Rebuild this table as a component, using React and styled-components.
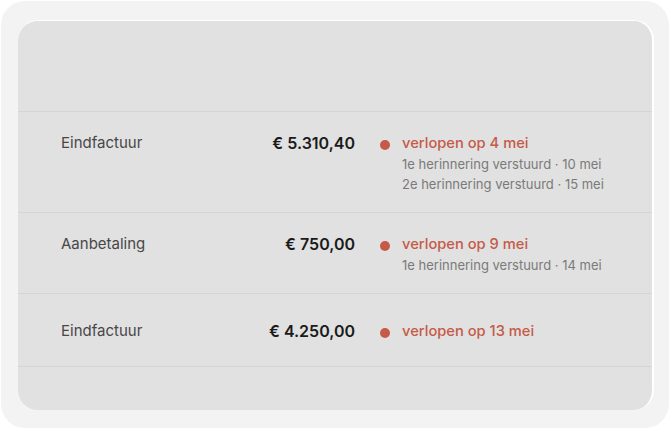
import React from "react";
import styled, { createGlobalStyle } from "styled-components";

const invoices = [
  {
    label: "Eindfactuur",
    amount: "€ 5.310,40",
    status: "verlopen op 4 mei",
    notes: ["1e herinnering verstuurd · 10 mei", "2e herinnering verstuurd · 15 mei"],
  },
  {
    label: "Aanbetaling",
    amount: "€ 750,00",
    status: "verlopen op 9 mei",
    notes: ["1e herinnering verstuurd · 14 mei"],
  },
  {
    label: "Eindfactuur",
    amount: "€ 4.250,00",
    status: "verlopen op 13 mei",
    notes: [],
  },
];

const App = () => {
  return (
    <>
      <GlobalStyle />
      <StFrame>
        <StPanel>
          <StHead />
          {invoices.map((inv, i) => (
            <StRow key={i}>
              <StLabel>{inv.label}</StLabel>
              <StAmount>{inv.amount}</StAmount>
              <StDot />
              <StStatus>
                <StOverdue>{inv.status}</StOverdue>
                {inv.notes.map((n) => (
                  <StNote key={n}>{n}</StNote>
                ))}
              </StStatus>
            </StRow>
          ))}
        </StPanel>
      </StFrame>
    </>
  );
};

export default App;

const GlobalStyle = createGlobalStyle`
  body {
    margin: 0;
    background: #ffffff;
    font-family: Inter, "Liberation Sans", sans-serif;
  }
`;

const StFrame = styled.div`
  box-sizing: border-box;
  margin: 1px;
  width: 668px;
  height: 427px;
  padding: 19px 15px 18px 17px;
  background: #f3f3f3;
  border-radius: 24px;
`;

const StPanel = styled.div`
  box-sizing: border-box;
  height: 100%;
  background: #e1e1e1;
  border-radius: 20px;
  border-top: 1px solid #ffffff;
  border-right: 2px solid #ffffff;
  overflow: hidden;
`;

const StHead = styled.div`
  height: 90px;
  border-bottom: 1px solid #d5d5d5;
`;

const StRow = styled.div`
  box-sizing: border-box;
  display: grid;
  grid-template-columns: 198px 96px 47px 1fr;
  align-content: center;
  align-items: start;
  min-height: 73px;
  padding: 20px 0 18px 43px;
  border-bottom: 1px solid #d5d5d5;
`;

const StLabel = styled.div`
  font-size: 15px;
  line-height: 22px;
  color: #474747;
`;

const StAmount = styled.div`
  text-align: right;
  font-size: 16px;
  font-weight: 600;
  line-height: 22px;
  color: #1a1a1a;
`;

const StDot = styled.span`
  justify-self: end;
  width: 10px;
  height: 10px;
  margin: 8px 12px 0 0;
  border-radius: 50%;
  background: #c55a48;
`;

const StStatus = styled.div`
  display: flex;
  flex-direction: column;
`;

const StOverdue = styled.div`
  font-size: 14.7px;
  font-weight: 500;
  line-height: 22px;
  color: #c55a48;
`;

const StNote = styled.div`
  font-size: 13px;
  line-height: 20px;
  color: #7a7a7a;
`;
